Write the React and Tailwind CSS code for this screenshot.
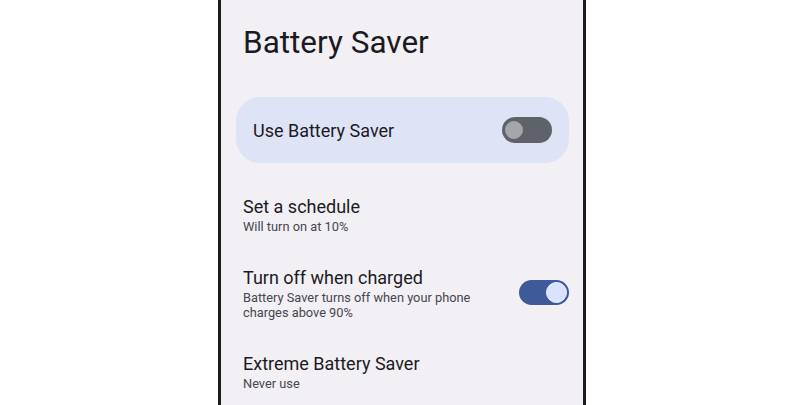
import React from "react";

const font = { fontFamily: "Roboto, 'Noto Sans', sans-serif" };

const Toggle = ({ on }) => {
  if (on) {
    return (
      <div className="flex h-[25px] w-[50px] shrink-0 items-center justify-end rounded-full bg-[#3e5a98] pr-[2px]">
        <div className="h-[21px] w-[21px] rounded-full border border-[#f4f6ff] bg-[#dae2ff]" />
      </div>
    );
  }
  return (
    <div className="flex h-[26px] w-[50px] shrink-0 items-center rounded-full bg-[#5e6269] pl-[3px]">
      <div className="h-[18px] w-[18px] rounded-full bg-[#a4a6aa]" />
    </div>
  );
};

const SettingRow = ({ title, subtitle, toggle }) => (
  <div className="flex items-center justify-between pl-[22px] pr-[14px]">
    <div className="flex flex-col">
      <div className="text-[18px] leading-[25px] text-[#1b1b1f]">{title}</div>
      <div className="w-[240px] text-[12.8px] leading-[15px] text-[#46464f]">{subtitle}</div>
    </div>
    {toggle !== undefined && <Toggle on={toggle} />}
  </div>
);

const App = () => {
  return (
    <div className="flex h-[405px] w-[800px] overflow-hidden bg-white pl-[218px]" style={font}>
      <div className="flex h-full w-[368px] flex-col border-x-[3px] border-[#1c1c1e] bg-[#f2f0f4]">
        <h1 className="mt-[25px] pl-[22px] text-[31.5px] leading-[36px] text-[#1b1b1f]">Battery Saver</h1>

        <div className="mx-[15px] mr-[14px] mt-[36px] flex h-[66px] items-center justify-between rounded-[24px] bg-[#dfe3f6] pl-[17px] pr-[17px]">
          <span className="text-[18px] text-[#1b1b1f]">Use Battery Saver</span>
          <Toggle on={false} />
        </div>

        <div className="mt-[31px] flex flex-col gap-[31px]">
          <SettingRow title="Set a schedule" subtitle="Will turn on at 10%" />
          <SettingRow
            title="Turn off when charged"
            subtitle="Battery Saver turns off when your phone charges above 90%"
            toggle={true}
          />
          <SettingRow title="Extreme Battery Saver" subtitle="Never use" />
        </div>
      </div>
    </div>
  );
};

export default App;
